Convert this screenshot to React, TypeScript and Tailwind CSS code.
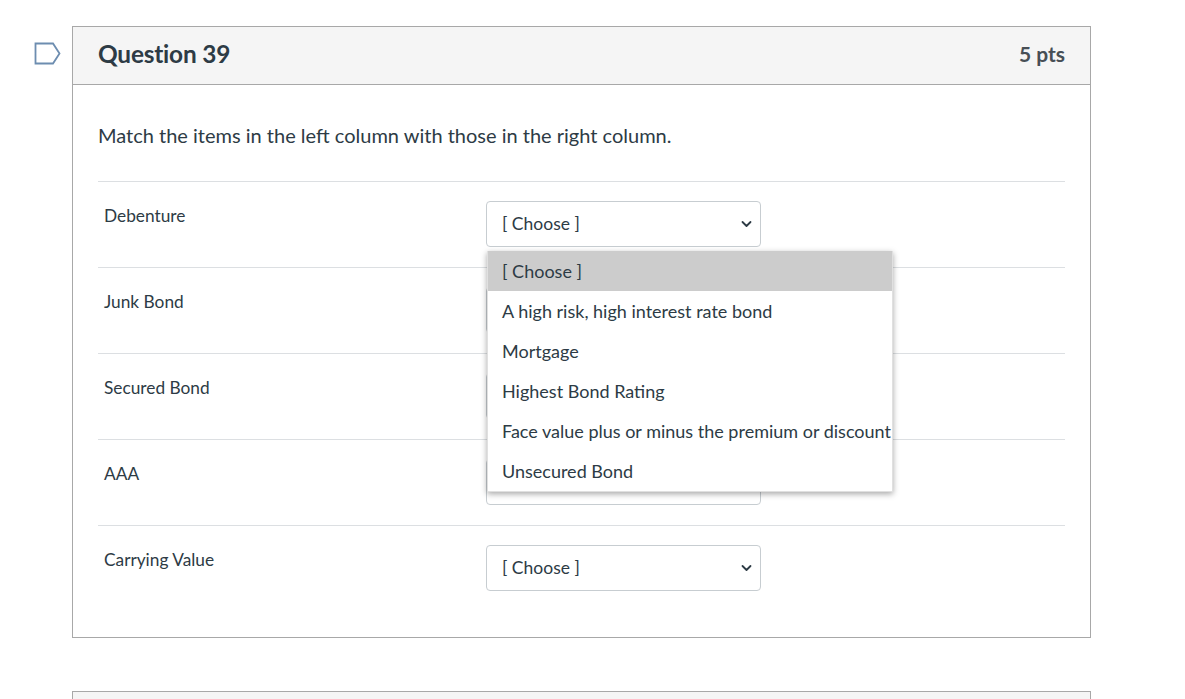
import React from "react";

const font = { fontFamily: "Lato, 'Open Sans', sans-serif" };

function Chevron() {
  return (
    <svg width="11" height="8" viewBox="0 0 11 8" className="absolute right-[8px] top-1/2 -translate-y-1/2">
      <path d="M1.5 2 L5.5 6 L9.5 2" fill="none" stroke="#2d3b45" strokeWidth="1.8" strokeLinecap="round" strokeLinejoin="round" />
    </svg>
  );
}

function Select({ hidden }: { hidden?: boolean }) {
  return (
    <div className="relative w-[275px] h-[46px] border border-[#c7cdd1] rounded-[4px] bg-white flex items-center pl-[15px] text-[17.5px] text-[#2d3b45]">
      {hidden ? null : "[ Choose ]"}
      {hidden ? null : <Chevron />}
    </div>
  );
}

const items = ["Debenture", "Junk Bond", "Secured Bond", "AAA", "Carrying Value"];
const options = [
  "A high risk, high interest rate bond",
  "Mortgage",
  "Highest Bond Rating",
  "Face value plus or minus the premium or discount",
  "Unsecured Bond",
];

export default function App() {
  return (
    <div className="w-[1185px] h-[699px] bg-white overflow-hidden text-[#2d3b45]" style={font}>
      <div className="flex pt-[26px] pl-[34px]">
        <div className="w-[38px] pt-[16px]">
          <svg width="28" height="24" viewBox="0 0 28 24">
            <path d="M1.5 1.5 H19 L25.5 11.5 L19 21.5 H1.5 Z" fill="none" stroke="#6d8db0" strokeWidth="1.8" strokeLinejoin="miter" />
          </svg>
        </div>
        <div className="w-[1019px]">
          <div className="border border-[#a8a8a8]">
            <div className="h-[58px] bg-[#f5f5f5] border-b border-[#a8a8a8] flex items-center justify-between pl-[25px] pr-[25px]">
              <div className="text-[24.4px] leading-[30px] font-bold text-[#2d3b45] -mt-[4px] tracking-[-0.2px]">Question 39</div>
              <div className="text-[21px] leading-[30px] font-bold text-[#474f56] -mt-[4px]">5 pts</div>
            </div>
            <div className="px-[25px] pt-[36px] pb-[26px]">
              <div className="text-[20px] leading-[28px] mb-[32px]">Match the items in the left column with those in the right column.</div>
              {items.map((it, i) => (
                <div key={it} className="border-t border-[#dcdfe2] flex h-[86px]">
                  <div className="w-[388px] pl-[6px] pt-[22px] text-[17.3px] leading-[24px]">{it}</div>
                  <div className="pt-[19px] relative">
                    <Select hidden={i >= 1 && i <= 3} />
                    {i === 0 && (
                      <div className="absolute z-10 left-[1px] top-[69px] w-[406px] bg-white shadow-[0_2px_6px_rgba(0,0,0,0.35)] border border-[#e0e0e0] text-[18px] text-[#2d3b45]">
                        <div className="h-[40px] bg-[#cccccc] flex items-center pl-[14px] -mt-px">[ Choose ]</div>
                        {options.map((o) => (
                          <div key={o} className="h-[40px] flex items-center pl-[14px] whitespace-nowrap">{o}</div>
                        ))}
                      </div>
                    )}
                  </div>
                </div>
              ))}
            </div>
          </div>
          <div className="mt-[53px] h-[40px] border border-[#a8a8a8] bg-[#f5f5f5]" />
        </div>
      </div>
    </div>
  );
}
